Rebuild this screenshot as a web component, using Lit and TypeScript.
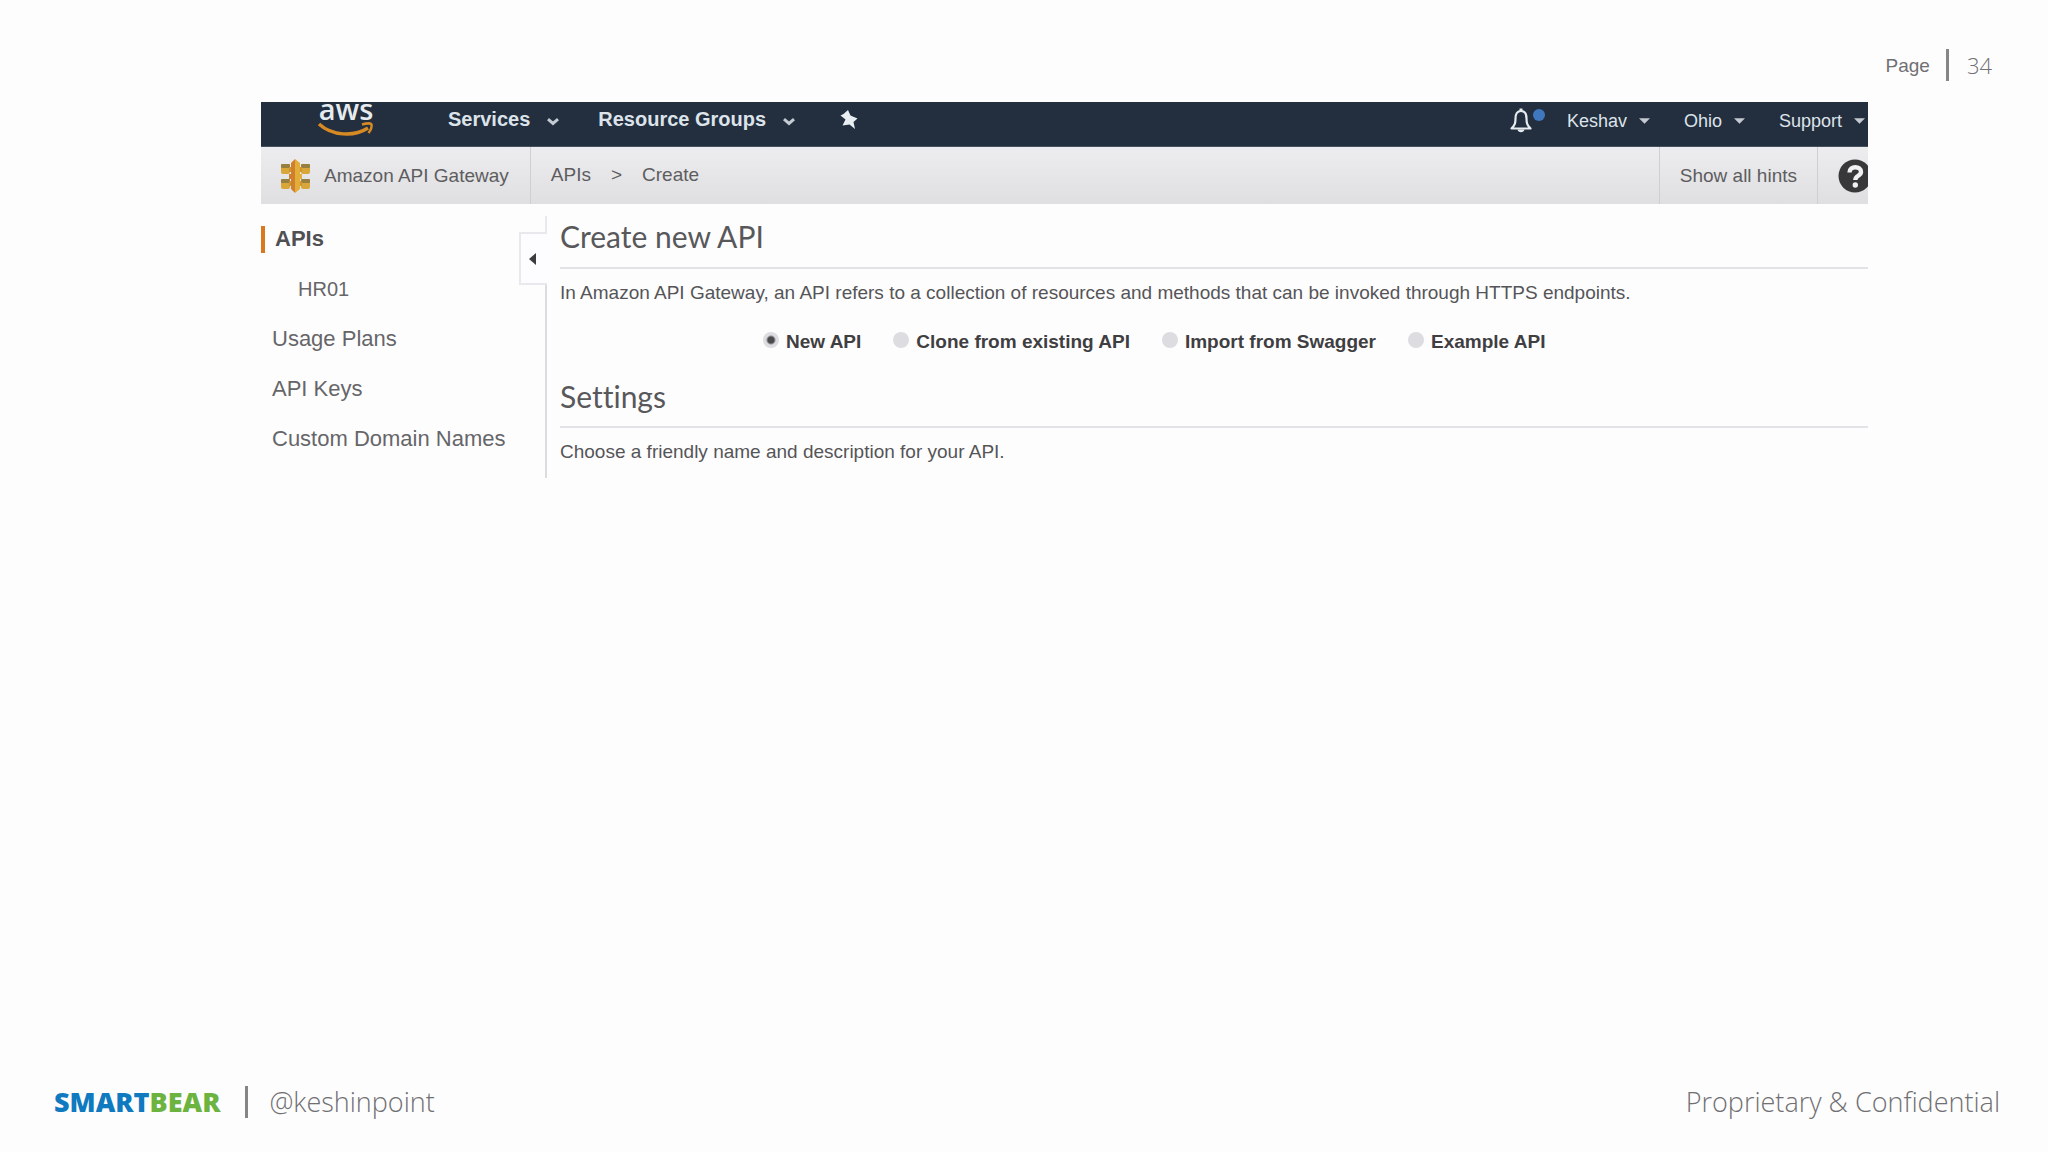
import { LitElement, html, css, svg } from "lit";
import { customElement, state } from "lit/decorators.js";

const chevron = html`<svg class="chevron" viewBox="0 0 14 10" aria-hidden="true">
  <path d="M2 2.2 7 6.500 12 2.2" fill="none" stroke="currentColor" stroke-width="3" />
</svg>`;

const caret = html`<svg class="caret" viewBox="0 0 12 8" aria-hidden="true">
  <path d="M0 1h12L6 7z" fill="currentColor" />
</svg>`;

@customElement("aws-nav")
export class AwsNav extends LitElement {
  static styles = css`
    :host {
      display: block;
      background: #232f3e;
      color: #dde3ea;
      font-family: "Liberation Sans", Arial, sans-serif;
    }
    .bar {
      display: flex;
      align-items: flex-start;
      height: 45px;
      overflow: hidden;
      border-bottom: 1px solid #465160;
      box-sizing: border-box;
    }
    .logo {
      flex: none;
      margin-left: 56px;
      width: 58px;
      height: 36px;
    }
    .logo svg {
      display: block;
      width: 58px;
      height: 36px;
    }
    button {
      display: flex;
      align-items: center;
      flex: none;
      border: 0;
      padding: 0;
      margin: 0;
      background: none;
      color: inherit;
      font: 18px/36px "Liberation Sans", Arial, sans-serif;
      white-space: nowrap;
    }
    .strong {
      gap: 16px;
      height: 34px;
      font-size: 20px;
      font-weight: 700;
    }
    .menus {
      display: flex;
      gap: 38px;
      margin-left: 73px;
    }
    .pin {
      margin-left: 42px;
      height: 36px;
    }
    .pin svg {
      width: 22px;
      height: 22px;
    }
    .account {
      display: flex;
      gap: 34px;
      margin-left: auto;
      margin-right: 3px;
    }
    .account button {
      gap: 12px;
      height: 38px;
    }
    .bell svg {
      width: 36px;
      height: 30px;
    }
    .account .bell {
      margin-right: -12px;
    }
    .chevron {
      width: 14px;
      height: 10px;
      margin-top: 5px;
      color: #c3cad2;
    }
    .caret {
      width: 11px;
      height: 8px;
      color: #c3cad2;
    }
  `;

  render() {
    return html`<nav class="bar" aria-label="Console">
      <a class="logo" href="#" aria-label="aws">
        <svg viewBox="0 0 58 36" aria-hidden="true">
          <text x="29" y="18" text-anchor="middle" font-family="Open Sans, sans-serif" font-size="29" font-weight="600" fill="#e6ebf0">aws</text>
          <path d="M2 22C15 34 37 35 51 26" fill="none" stroke="#d78a24" stroke-width="3.5" />
          <path d="M45 22.500C50 21 54 21 54.500 22.500C55 25 53.500 28.500 51.500 31" fill="none" stroke="#d78a24" stroke-width="2.500" />
        </svg>
      </a>
      <div class="menus">
        <button class="strong">Services ${chevron}</button>
        <button class="strong">Resource Groups ${chevron}</button>
      </div>
      <button class="pin" aria-label="Pin shortcuts">
        <svg viewBox="0 0 22 22" aria-hidden="true">
          <path d="M10 1 12.500 6.500 19.500 9.500 15.500 13 17 20 11.500 15.500 4.500 16.500 7.500 10.500 2.500 6.500 5.500 5z" fill="#e9eef2" />
        </svg>
      </button>
      <div class="account">
        <button class="bell" aria-label="Notifications">
          <svg viewBox="0 0 36 30" aria-hidden="true">
            <path d="M2.500 22.500C6 19 6.500 17 6.500 12.500C6.500 7.500 8.500 5 12 5S17.500 7.500 17.500 12.500C17.500 17 18 19 21.500 22.500z" fill="none" stroke="#e6ebf0" stroke-width="2.200" stroke-linejoin="round" />
            <path d="M8.500 23.500h7C15 27 9 27 8.500 23.500zM10.500 2.500h3v3h-3z" fill="#e6ebf0" />
            <circle cx="30" cy="9" r="6" fill="#3f78bf" />
          </svg>
        </button>
        <button>Keshav ${caret}</button>
        <button>Ohio ${caret}</button>
        <button>Support ${caret}</button>
      </div>
    </nav>`;
  }
}

@customElement("service-bar")
export class ServiceBar extends LitElement {
  static styles = css`
    :host {
      display: block;
      font: 19px/56px "Liberation Sans", Arial, sans-serif;
      color: #5d5d60;
    }
    .bar {
      display: flex;
      height: 57px;
      overflow: hidden;
      background: linear-gradient(#ededef, #dfdee0);
      white-space: nowrap;
    }
    a {
      color: inherit;
      text-decoration: none;
    }
    .service {
      display: flex;
      align-items: center;
      gap: 13px;
      padding: 0 21px 0 19px;
      border-right: 1px solid #cfcfd2;
    }
    .service svg {
      width: 31px;
      height: 34px;
    }
    .crumbs {
      display: flex;
      gap: 20px;
      padding-left: 20px;
    }
    .tools {
      display: flex;
      flex: none;
      margin-left: auto;
      margin-right: -4px;
    }
    button {
      border: 0;
      border-left: 1px solid #cfcfd2;
      margin: 0;
      padding: 0 20px;
      background: none;
      color: inherit;
      font: inherit;
    }
    .help {
      display: flex;
      align-items: center;
      padding: 0 0 0 20px;
    }
    .help svg {
      width: 34px;
      height: 34px;
    }
  `;

  render() {
    const blocks = [
      [1, 5], [21, 5], [1, 20], [21, 20],
    ].map(
      ([x, y]) => svg`<rect x="${x}" y="${y}" width="9" height="10" rx="2" fill="#d9a63a" />
        <rect x="${x}" y="${y}" width="9" height="4" rx="1" fill="#97803f" />`,
    );
    return html`<div class="bar">
      <a class="service" href="#">
        <svg viewBox="0 0 31 34" aria-hidden="true">
          ${blocks}
          <path d="M9 8h13v5H9zM9 22h13v5H9z" fill="#cf9531" />
          <path d="M11 4 15 0v34l-4-4V20H9v-5h2z" fill="#d0802c" />
          <path d="M15 0l5 4v11h2v5h-2v10l-5 4z" fill="#e3ad3a" />
        </svg>
        Amazon API Gateway
      </a>
      <nav class="crumbs" aria-label="Breadcrumb">
        <a href="#">APIs</a><span>&gt;</span><a href="#">Create</a>
      </nav>
      <div class="tools">
        <button>Show all hints</button>
        <button class="help" aria-label="Help">
          <svg viewBox="0 0 34 34" aria-hidden="true">
            <circle cx="17" cy="17" r="16.500" fill="#38383a" />
            <path d="M11.500 13.500C11.500 6.500 23 6.500 23 13C23 17 17.300 16.500 17.300 21" fill="none" stroke="#f1f1f2" stroke-width="4.400" />
            <circle cx="17.300" cy="26" r="2.700" fill="#f1f1f2" />
          </svg>
        </button>
      </div>
    </div>`;
  }
}

@customElement("api-sidebar")
export class ApiSidebar extends LitElement {
  static styles = css`
    :host {
      display: flex;
      flex: none;
      font: 22px/50px "Liberation Sans", Arial, sans-serif;
      color: #666669;
    }
    .list {
      width: 258px;
      margin: 0;
      padding: 10px 0 0;
      list-style: none;
      box-sizing: border-box;
      white-space: nowrap;
    }
    a {
      display: block;
      padding-left: 11px;
      color: inherit;
      text-decoration: none;
    }
    .current {
      display: flex;
      align-items: center;
      gap: 10px;
      padding: 0;
      font-weight: 700;
      color: #505053;
    }
    .current::before {
      content: "";
      width: 4px;
      height: 27px;
      background: #d9781c;
    }
    .child {
      padding-left: 37px;
      font-size: 20px;
    }
    .edge {
      display: flex;
      flex-direction: column;
      width: 28px;
    }
    .edge::before,
    .edge::after {
      content: "";
      width: 2px;
      margin-left: auto;
      background: #dcdbdf;
    }
    .edge::before {
      height: 16px;
      margin-top: 12px;
      background: #e9e8ec;
    }
    .edge::after {
      flex: 1;
    }
    .toggle {
      display: flex;
      align-items: center;
      justify-content: center;
      height: 53px;
      padding: 0 3px 0 0;
      margin: 0;
      border: 2px solid #e9e8ec;
      border-right: 0;
      background: #fdfcfe;
    }
    .toggle svg {
      width: 7px;
      height: 12px;
    }
  `;

  render() {
    return html`<ul class="list">
        <li><a class="current" href="#">APIs</a></li>
        <li><a class="child" href="#">HR01</a></li>
        <li><a href="#">Usage Plans</a></li>
        <li><a href="#">API Keys</a></li>
        <li><a href="#">Custom Domain Names</a></li>
      </ul>
      <div class="edge">
        <button class="toggle" aria-label="Collapse sidebar">
          <svg viewBox="0 0 7 12" aria-hidden="true"><path d="M7 0v12L0 6z" fill="#3c3c3f" /></svg>
        </button>
      </div>`;
  }
}

@customElement("create-api")
export class CreateApi extends LitElement {
  static styles = css`
    :host {
      display: block;
      flex: 1;
      min-width: 0;
      padding-left: 13px;
      font: 19px/24px "Liberation Sans", Arial, sans-serif;
      color: #555558;
    }
    h2 {
      margin: 0;
      border-bottom: 2px solid #e3e2e6;
      font: 400 30px/36px Lato, sans-serif;
      font-variant-ligatures: none;
      color: #58585b;
    }
    .title {
      padding: 14px 0 13px;
    }
    .settings {
      padding: 12px 0;
    }
    p {
      margin: 0;
      padding: 12px 0;
    }
    .choices {
      display: flex;
      gap: 32px;
      margin: 0;
      padding: 13px 0 12px 203px;
      font-weight: 700;
      color: #3f3f42;
    }
    label {
      display: flex;
      align-items: center;
      gap: 7px;
      white-space: nowrap;
    }
    input {
      appearance: none;
      width: 16px;
      height: 16px;
      margin: 0 0 4px;
      border-radius: 50%;
      background: #dddce0;
    }
    input:checked {
      background: radial-gradient(circle, #4b4b4e 3px, #dddce0 5px);
    }
  `;

  @state() private selected = "New API";

  render() {
    const options = ["New API", "Clone from existing API", "Import from Swagger", "Example API"];
    return html`<h2 class="title">Create new API</h2>
      <p>In Amazon API Gateway, an API refers to a collection of resources and methods that can be invoked through HTTPS endpoints.</p>
      <div class="choices" role="radiogroup" aria-label="API source">
        ${options.map(
          (name) => html`<label>
            <input type="radio" name="source" .checked=${this.selected === name} @change=${() => (this.selected = name)} />
            ${name}
          </label>`,
        )}
      </div>
      <h2 class="settings">Settings</h2>
      <p>Choose a friendly name and description for your API.</p>`;
  }
}

@customElement("app-root")
export class AppRoot extends LitElement {
  static styles = css`
    :host {
      display: flex;
      flex-direction: column;
      min-height: 100vh;
      box-sizing: border-box;
      background: #fefdfe;
      color: #707073;
      font-family: "Open Sans", sans-serif;
    }
    .top {
      display: flex;
      align-items: center;
      justify-content: flex-end;
      gap: 16px;
      padding: 48px 56px 20px;
      line-height: 34px;
    }
    .page {
      padding-top: 1px;
      font: 19px/33px "Liberation Sans", Arial, sans-serif;
    }
    .number {
      font-size: 22px;
      font-weight: 300;
      margin-left: 2px;
    }
    .rule {
      width: 3px;
      height: 32px;
      background: #868689;
    }
    .console {
      margin: 0 180px 0 261px;
      overflow: hidden;
    }
    .body {
      display: flex;
      height: 274px;
    }
    .bottom {
      display: flex;
      align-items: center;
      margin-top: auto;
      padding: 0 48px 32px 54px;
      font-size: 27px;
      line-height: 36px;
      font-weight: 300;
    }
    .brand {
      font-weight: 800;
      color: #0f7abf;
    }
    .bear {
      color: #6cb33f;
    }
    .bottom .rule {
      margin: 0 21px 0 25px;
    }
    .legal {
      margin-left: auto;
    }
  `;

  render() {
    return html`<header class="top">
        <span class="page">Page</span><span class="rule"></span><span class="number">34</span>
      </header>
      <main class="console">
        <aws-nav></aws-nav>
        <service-bar></service-bar>
        <div class="body">
          <api-sidebar></api-sidebar>
          <create-api></create-api>
        </div>
      </main>
      <footer class="bottom">
        <span class="brand">SMART<span class="bear">BEAR</span></span>
        <span class="rule"></span>
        <span>@keshinpoint</span>
        <span class="legal">Proprietary &amp; Confidential</span>
      </footer>`;
  }
}
